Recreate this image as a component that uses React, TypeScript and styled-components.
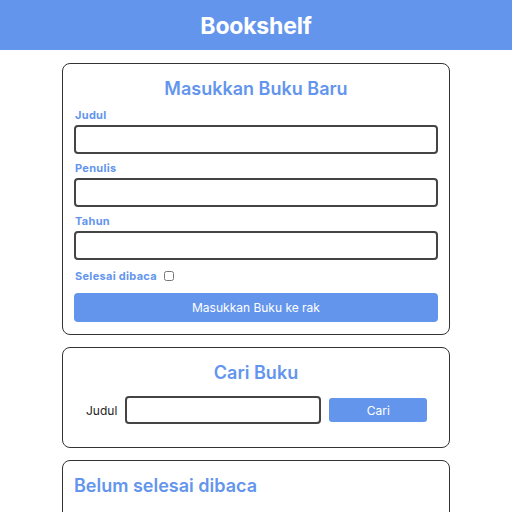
import { FC, useState } from "react";
import styled, { createGlobalStyle } from "styled-components";

const GlobalStyle = createGlobalStyle`
  * {
    box-sizing: border-box;
  }

  body {
    margin: 0;
    font-family: Inter, "Noto Sans", sans-serif;
    background: white;
  }
`;

const Header = styled.header`
  height: 50px;
  background-color: cornflowerblue;
  color: white;
  display: flex;
  align-items: center;
  justify-content: center;
`;

const HeaderTitle = styled.h1`
  margin: 2px 0 0;
  font-size: 23px;
  font-weight: 700;
  letter-spacing: -0.2px;
`;

const Main = styled.main`
  display: flex;
  flex-direction: column;
  align-items: center;
  gap: 12px;
  padding-top: 13px;
`;

const Section = styled.section<{ $minHeight?: number }>`
  width: 388px;
  min-height: ${(p) => (p.$minHeight ? `${p.$minHeight}px` : "auto")};
  border: 1px solid #333;
  border-radius: 8px;
  padding: 14px 11px 12px;
`;

const SectionTitle = styled.h2<{ $align?: "left" | "center" }>`
  margin: 0 0 9px;
  font-size: 18px;
  font-weight: 600;
  color: cornflowerblue;
  text-align: ${(p) => p.$align || "center"};
`;

const Field = styled.div`
  display: flex;
  flex-direction: column;
  margin-bottom: 7px;
`;

const Label = styled.label`
  font-size: 11px;
  font-weight: 700;
  letter-spacing: 0.3px;
  color: cornflowerblue;
  margin: 0 0 3px 1px;
`;

const TextInput = styled.input`
  height: 29px;
  border: 2px solid #444;
  border-radius: 4px;
  padding: 0 6px;
  font: inherit;
`;

const CheckRow = styled.div`
  display: flex;
  align-items: center;
  gap: 7px;
  margin: 9px 0 10px 1px;

  & > label {
    margin: 0;
  }
`;

const Checkbox = styled.input`
  margin: 0;
  width: 10px;
  height: 10px;
`;

const SubmitButton = styled.button`
  width: 100%;
  height: 29px;
  border: none;
  border-radius: 4px;
  background-color: cornflowerblue;
  color: white;
  font: inherit;
  font-size: 12px;
  cursor: pointer;
`;

const SearchRow = styled.form`
  display: flex;
  align-items: center;
  gap: 8px;
  padding: 4px 0 11px 12px;
`;

const SearchLabel = styled.label`
  font-size: 12px;
  color: #222;
`;

const SearchInput = styled(TextInput)`
  width: 196px;
  height: 28px;
`;

const SearchButton = styled.button`
  width: 98px;
  height: 24px;
  border: none;
  border-radius: 3px;
  background-color: cornflowerblue;
  color: white;
  font: inherit;
  font-size: 12px;
  cursor: pointer;
`;

const App: FC = () => {
  const [title, setTitle] = useState("");
  const [author, setAuthor] = useState("");
  const [year, setYear] = useState("");
  const [done, setDone] = useState(false);
  const [query, setQuery] = useState("");

  return (
    <>
      <GlobalStyle />
      <Header>
        <HeaderTitle>Bookshelf</HeaderTitle>
      </Header>
      <Main>
        <Section>
          <SectionTitle>Masukkan Buku Baru</SectionTitle>
          <Field>
            <Label htmlFor="inputBookTitle">Judul</Label>
            <TextInput
              id="inputBookTitle"
              value={title}
              onChange={(e) => setTitle(e.target.value)}
            />
          </Field>
          <Field>
            <Label htmlFor="inputBookAuthor">Penulis</Label>
            <TextInput
              id="inputBookAuthor"
              value={author}
              onChange={(e) => setAuthor(e.target.value)}
            />
          </Field>
          <Field>
            <Label htmlFor="inputBookYear">Tahun</Label>
            <TextInput
              id="inputBookYear"
              value={year}
              onChange={(e) => setYear(e.target.value)}
            />
          </Field>
          <CheckRow>
            <Label htmlFor="inputBookIsComplete">Selesai dibaca</Label>
            <Checkbox
              id="inputBookIsComplete"
              type="checkbox"
              checked={done}
              onChange={(e) => setDone(e.target.checked)}
            />
          </CheckRow>
          <SubmitButton>Masukkan Buku ke rak</SubmitButton>
        </Section>

        <Section>
          <SectionTitle>Cari Buku</SectionTitle>
          <SearchRow onSubmit={(e) => e.preventDefault()}>
            <SearchLabel htmlFor="searchBookTitle">Judul</SearchLabel>
            <SearchInput
              id="searchBookTitle"
              value={query}
              onChange={(e) => setQuery(e.target.value)}
            />
            <SearchButton type="submit">Cari</SearchButton>
          </SearchRow>
        </Section>

        <Section $minHeight={100}>
          <SectionTitle $align="left">Belum selesai dibaca</SectionTitle>
        </Section>
      </Main>
    </>
  );
};

export default App;
